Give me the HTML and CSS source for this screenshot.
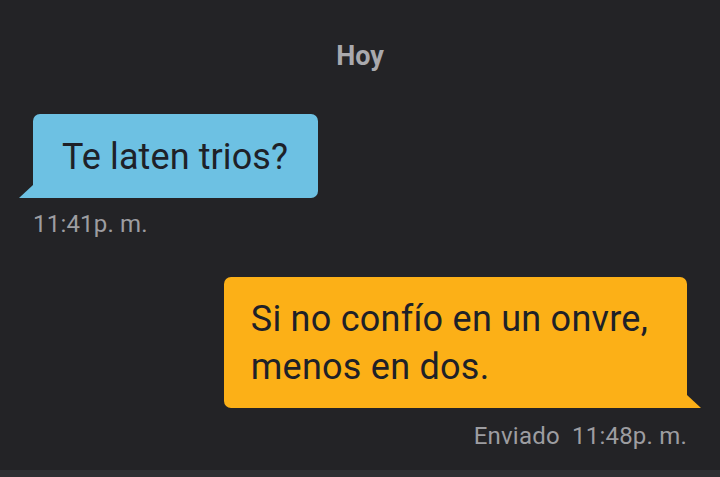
FILE: index.html
```html
<!DOCTYPE html>
<html lang="es">
<head>
    <meta charset="UTF-8" />
    <meta name="viewport" content="width=device-width, initial-scale=1.0" />
    <title>Chat</title>
    <link rel="stylesheet" href="styles.css">
</head>
<body>
    <div class="chat">
        <div class="day">Hoy</div>

        <div class="msg msg-in">
            <div class="bubble">Te laten trios?</div>
            <div class="meta">11:41p. m.</div>
        </div>

        <div class="msg msg-out">
            <div class="bubble">Si no confío en un onvre,<br>menos en dos.</div>
            <div class="meta">Enviado&nbsp; 11:48p. m.</div>
        </div>
    </div>
    <div class="composer"></div>
</body>
</html>
```

FILE: styles.css
```css
/* Basic reset */
* {
    margin: 0;
    padding: 0;
    box-sizing: border-box;
}

body {
    font-family: Roboto, "DejaVu Sans", sans-serif;
    background-color: #232326;
    width: 720px;
    height: 477px;
    overflow: hidden;
    display: flex;
    flex-direction: column;
}

/* Message list */
.chat {
    flex: 1;
    display: flex;
    flex-direction: column;
    padding: 0 33px;
}

/* Day separator */
.day {
    text-align: center;
    color: #a9a9ae;
    font-size: 27px;
    font-weight: bold;
    letter-spacing: 0;
    line-height: 30px;
    padding-top: 41px;
    margin-bottom: 43px;
}

.msg {
    display: flex;
    flex-direction: column;
}

.msg-in {
    align-items: flex-start;
}

.msg-out {
    align-items: flex-end;
    margin-top: 39px;
}

/* Chat bubbles */
.bubble {
    position: relative;
    color: #1e2128;
    font-size: 36px;
    border-radius: 7px;
}

.msg-in .bubble {
    background-color: #6dc1e3;
    padding: 20px 30px 18px 29px;
    line-height: 46px;
    letter-spacing: 0.1px;
    border-bottom-left-radius: 0;
}

.msg-out .bubble {
    background-color: #fcb017;
    padding: 18px 39px 17px 27px;
    line-height: 48px;
    letter-spacing: 0.25px;
    border-bottom-right-radius: 0;
}

/* Bubble tails */
.bubble::after {
    content: "";
    position: absolute;
    bottom: 0;
    width: 14px;
    height: 13px;
}

.msg-in .bubble::after {
    left: -14px;
    background-color: #6dc1e3;
    clip-path: polygon(100% 0, 100% 100%, 0 100%);
}

.msg-out .bubble::after {
    right: -14px;
    background-color: #fcb017;
    clip-path: polygon(0 0, 100% 100%, 0 100%);
}

/* Timestamps */
.meta {
    color: #9d9da1;
    font-size: 24px;
    line-height: 28px;
    letter-spacing: 0.2px;
}

.msg-in .meta {
    margin-top: 12px;
}

.msg-out .meta {
    margin-top: 14px;
}

/* Bottom input bar edge */
.composer {
    height: 7px;
    background-color: #2e2f32;
}
```
